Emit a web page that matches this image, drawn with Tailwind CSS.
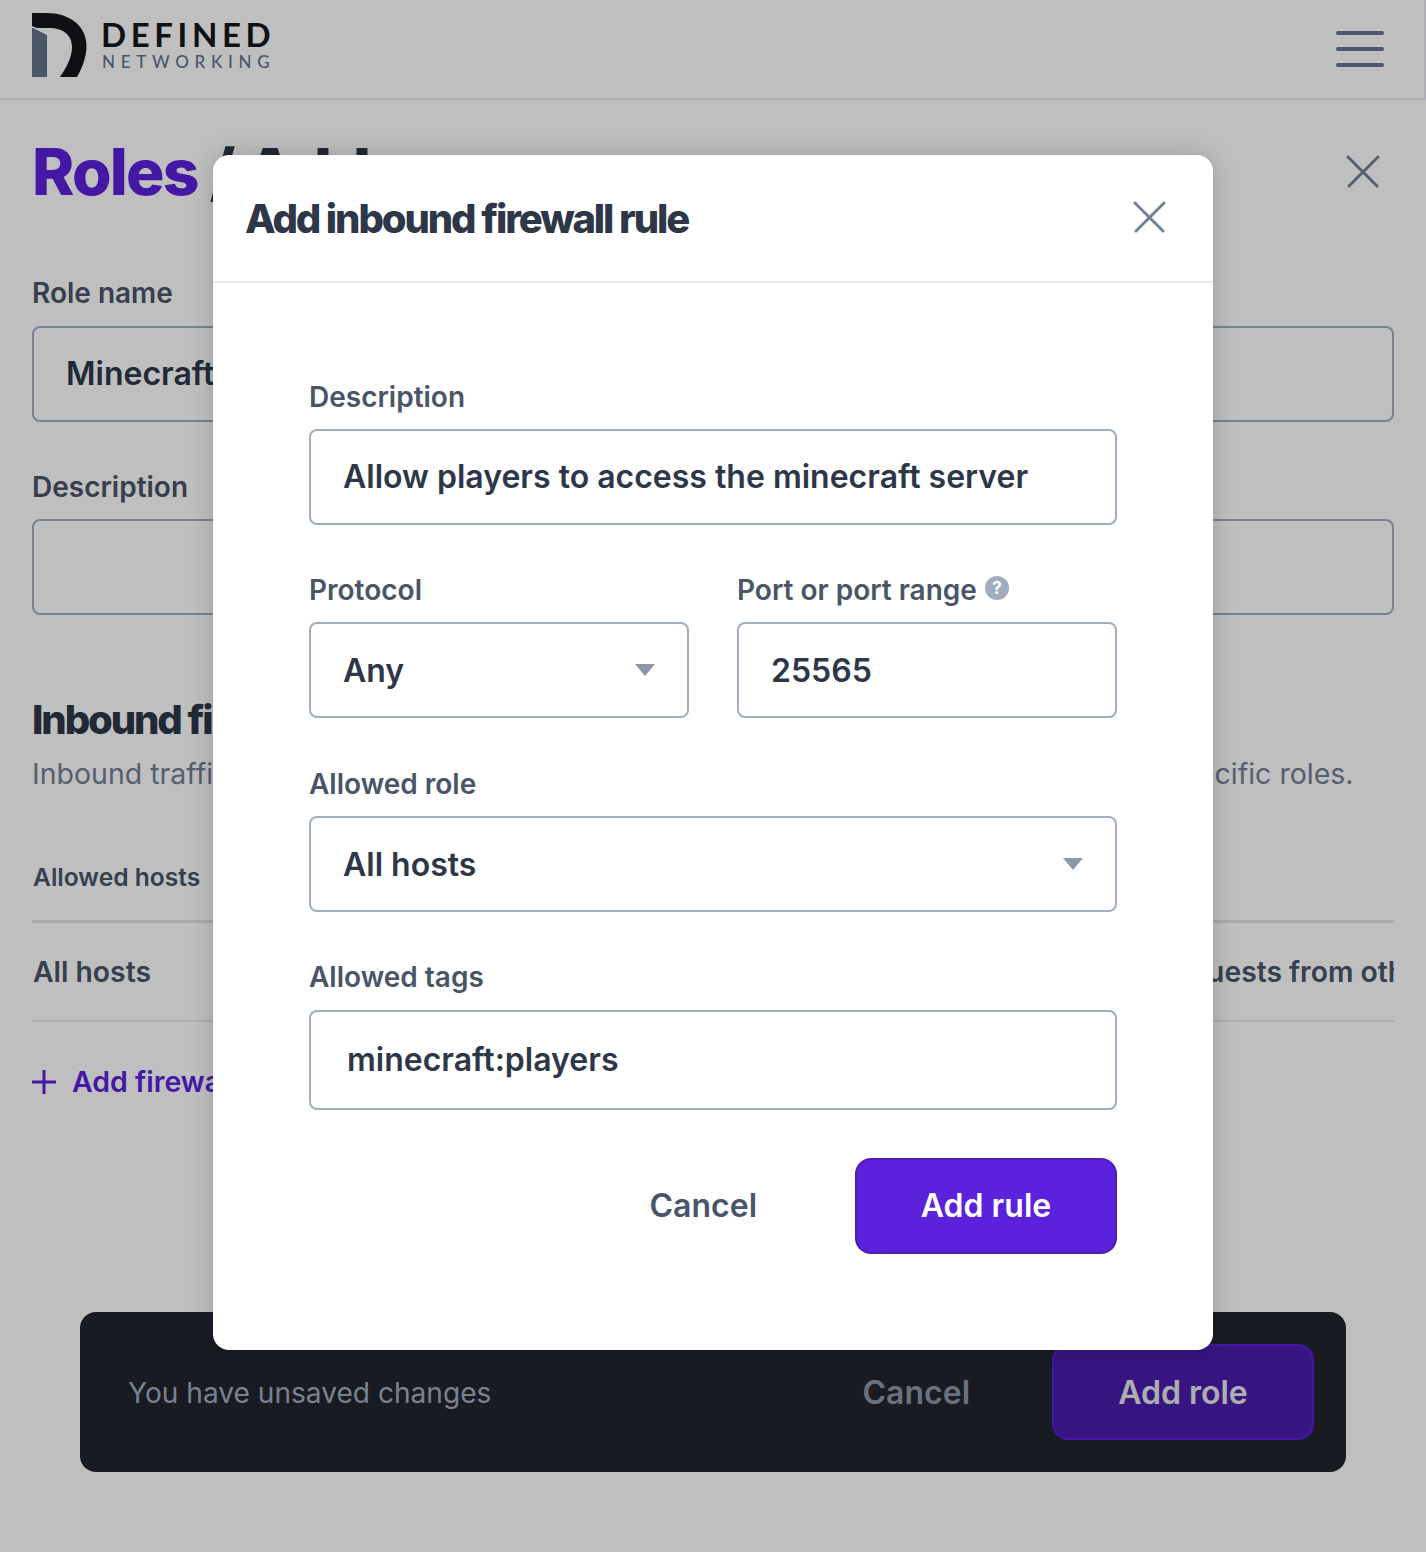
<!DOCTYPE html>
<html lang="en">
<head>
  <meta charset="UTF-8" />
  <meta name="viewport" content="width=device-width, initial-scale=1.0"/>
  <title>Roles / Add – Defined Networking</title>
  <script src="https://cdn.jsdelivr.net/npm/@tailwindcss/browser@4"></script>
</head>
<body class="relative h-[1552px] overflow-hidden bg-white font-[Inter,sans-serif] text-[#2d3748]">

  <!-- HEADER -->
  <header class="h-[100px] border-b-2 border-r-2 border-[#e8e8f0] pl-8 pr-[40px] flex items-center justify-between">
    <a href="#" class="flex items-start gap-[14px] -mt-[8px]">
      <svg class="w-[55px] h-[64px]" viewBox="0 0 55 64">
        <path fill="#64748b" d="M0 14.5 L15 22 V64 H0 Z"/>
        <path fill="#14161a" d="M0 0 H14 C38 0 54.500 13 54.500 33 C54.500 44 50 55 45 64 H28 C34 55 40 45 40 34 C40 22 31 15 17 15 H5 L0 13 Z"/>
      </svg>
      <div class="font-[Lato,sans-serif] leading-none mt-[5px]">
        <div class="text-[33px] h-[32px] leading-[32px] font-bold tracking-[4.6px] text-[#14161a]">DEFINED</div>
        <div class="text-[17px] h-[18px] leading-[18px] mt-[3px] ml-[1px] tracking-[5.7px] font-medium text-[#64748b]">NETWORKING</div>
      </div>
    </a>
    <button class="flex flex-col gap-[12px]">
      <span class="block w-[48px] h-[4px] rounded-full bg-[#64748b]"></span>
      <span class="block w-[48px] h-[4px] rounded-full bg-[#64748b]"></span>
      <span class="block w-[48px] h-[4px] rounded-full bg-[#64748b]"></span>
    </button>
  </header>

  <!-- PAGE -->
  <main class="px-8">
    <div class="flex items-center justify-between pt-[36px] h-[144px] pb-[36px]">
      <h1 class="text-[64px] leading-[72px] font-extrabold tracking-[-1.8px] text-[#2d3748]"><span class="text-[#5b21dd]">Roles</span> / Add</h1>
      <svg class="w-[38px] h-[38px] mr-[12px]" viewBox="0 0 38 38" fill="none" stroke="#718096" stroke-width="3" stroke-linecap="round"><path d="M4 4 L33 33 M34 4 L5 33"/></svg>
    </div>

    <label class="block text-[28px] leading-[34px] font-semibold text-[#4a5568] mt-[32px] h-[34px]">Role name</label>
    <div class="mt-[16px] h-[96px] border-2 border-[#a0aec0] rounded-lg pl-[32px] flex items-center text-[32px] font-semibold">Minecraft</div>

    <label class="block text-[28px] leading-[34px] font-semibold text-[#4a5568] mt-[48px] h-[34px]">Description</label>
    <div class="mt-[15px] h-[96px] border-2 border-[#a0aec0] rounded-lg"></div>

    <h2 class="mt-[81px] text-[40px] leading-[48px] font-extrabold tracking-[-2.1px]">Inbound firewall rules</h2>
    <p class="mt-[10px] text-[28.500px] leading-[40px] text-[#718096] whitespace-nowrap">Inbound traffic is blocked by default. Add rules to allow traffic from all hosts or from specific roles.</p>

    <div class="mt-[66px] h-[63px] pl-[1px] border-b-[3px] border-[#e2e4ea] text-[24.600px] leading-[34px] font-semibold text-[#4a5568]">Allowed hosts</div>
    <div class="h-[99px] pl-[1px] pt-[2px] border-b-2 border-[#e8e8f0] flex items-center justify-between overflow-hidden text-[28.300px] font-semibold text-[#4a5568] whitespace-nowrap">
      <span>All hosts</span>
      <span class="w-[315px] shrink-0">Allow requests from other hosts</span>
    </div>
    <a href="#" class="mt-[37px] flex items-center gap-[16px] text-[28.500px] leading-[46px] font-semibold text-[#5b21dd]">
      <svg class="w-[24px] h-[24px]" viewBox="0 0 24 24" fill="none" stroke="currentColor" stroke-width="3"><path d="M12 0 V24 M0 12 H24"/></svg>
      Add firewall rule
    </a>
  </main>

  <!-- UNSAVED BAR -->
  <div class="absolute left-[80px] top-[1312px] w-[1266px] h-[160px] rounded-2xl bg-[#22252f] pl-[48px] pr-[32px] flex items-center justify-between">
    <span class="text-[28.100px] pt-[2px] font-normal text-[#a0aec0]">You have unsaved changes</span>
    <div class="flex items-center gap-[82px]">
      <button class="text-[32px] pt-[2px] font-semibold text-[#8d99a8]">Cancel</button>
      <button class="w-[262px] h-[96px] pt-[2px] rounded-2xl bg-[#4a1cac] border-2 border-[#5b21dd] text-[32px] font-semibold text-[#e8e8ea]">Add role</button>
    </div>
  </div>

  <!-- OVERLAY -->
  <div class="absolute inset-0 bg-black/25"></div>

  <!-- MODAL -->
  <div class="absolute left-[213px] top-[155px] w-[1000px] h-[1195px] rounded-2xl bg-white shadow-[0_0_24px_rgba(0,0,0,0.2)]">
    <div class="h-[128px] border-b-2 border-[#e2e8f0] pl-[32px] pr-[47px] flex items-center justify-between">
      <h2 class="text-[40px] pt-[2px] font-extrabold tracking-[-2.100px] text-[#2d3748]">Add inbound firewall rule</h2>
      <svg class="w-[34px] h-[34px] -mt-[2px]" viewBox="0 0 34 34" fill="none" stroke="#718096" stroke-width="3" stroke-linecap="round"><path d="M3 3 L31 31 M32 3 L4 31"/></svg>
    </div>

    <form class="px-[96px] pt-[97px]">
      <label class="block text-[28px] leading-[34px] font-semibold text-[#4a5568]">Description</label>
      <div class="mt-[15px] h-[96px] border-2 border-[#a0aec0] rounded-lg pl-[32px] flex items-center text-[32px] font-semibold">Allow players to access the minecraft server</div>

      <div class="mt-[48px] grid grid-cols-2 gap-x-[48px]">
        <div>
          <label class="block text-[28px] leading-[34px] font-semibold text-[#4a5568]">Protocol</label>
          <div class="mt-[15px] h-[96px] border-2 border-[#a0aec0] rounded-lg pl-[32px] pr-[31px] flex items-center justify-between text-[32px] font-semibold">
            <span class="pt-[2px]">Any</span>
            <svg class="w-[22px] h-[12px]" viewBox="0 0 22 12"><path fill="#8a97a9" d="M1 0 H21 L11 12 Z"/></svg>
          </div>
        </div>
        <div>
          <label class="flex items-center gap-[8px] text-[28px] leading-[34px] font-semibold text-[#4a5568]">Port or port range
            <svg class="w-[24px] h-[24px] -mt-[4px]" viewBox="0 0 24 24"><circle cx="12" cy="12" r="12" fill="#a0aec0"/><text x="12" y="18" text-anchor="middle" font-family="Inter, sans-serif" font-size="17" font-weight="700" fill="#fff">?</text></svg>
          </label>
          <div class="mt-[15px] h-[96px] border-2 border-[#a0aec0] rounded-lg pl-[32px] pt-[1px] flex items-center text-[32px] font-semibold">25565</div>
        </div>
      </div>

      <label class="block mt-[49px] text-[28px] leading-[34px] font-semibold text-[#4a5568]">Allowed role</label>
      <div class="mt-[15px] h-[96px] border-2 border-[#a0aec0] rounded-lg pl-[32px] pr-[31px] flex items-center justify-between text-[32px] font-semibold">
        <span class="pt-[2px]">All hosts</span>
        <svg class="w-[22px] h-[12px]" viewBox="0 0 22 12"><path fill="#8a97a9" d="M1 0 H21 L11 12 Z"/></svg>
      </div>

      <label class="block mt-[48px] text-[28px] leading-[34px] font-semibold text-[#4a5568]">Allowed tags</label>
      <div class="mt-[16px] h-[100px] border-2 border-[#a0aec0] rounded-lg pl-[36px] flex items-center text-[32px] font-semibold">minecraft:players</div>

      <div class="mt-[48px] flex items-center justify-end gap-[98px]">
        <button type="button" class="text-[32px] font-semibold text-[#4a5568]">Cancel</button>
        <button type="button" class="w-[262px] h-[96px] rounded-2xl bg-[#5b21dd] border-2 border-[#4c1fb0] text-[32px] font-semibold text-white">Add rule</button>
      </div>
    </form>
  </div>

</body>
</html>
